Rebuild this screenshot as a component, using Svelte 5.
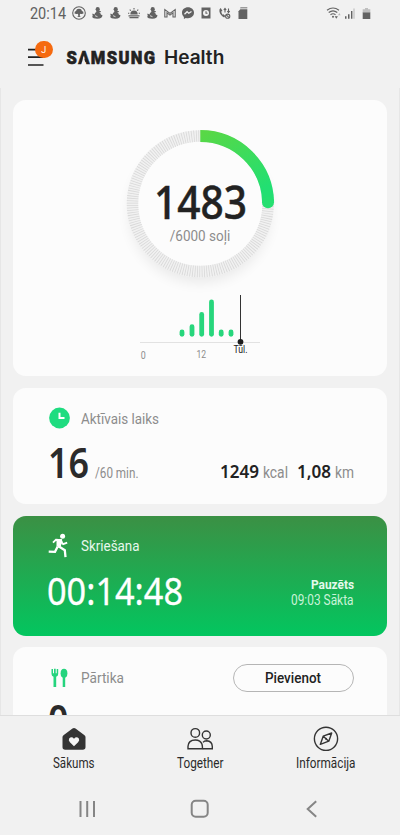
<script>
  const bars = [
    { x: 182, top: 329.5 },
    { x: 192, top: 324.3 },
    { x: 201.7, top: 312 },
    { x: 211.5, top: 299.5 },
    { x: 221.2, top: 329.5 },
    { x: 231, top: 329.5 }
  ];
</script>

{#snippet fit(text, width, height, base, cls)}
  <svg class="fit {cls}" {width} {height}><text x="0" y={base} textLength={width} lengthAdjust="spacingAndGlyphs">{text}</text></svg>
{/snippet}

{#snippet snowman()}
  <svg class="st" width="14" height="14" viewBox="0 0 14 14"><circle cx="7.700" cy="3.200" r="2.100"/><path d="M6.300 4.500h2.800l2 .9-.5.900-1.400-.1q1.800 1.300 1.800 2.600l1.400.3q.3 3.700-5.100 3.700-4.600 0-5.300-2.200l.9-.4q-.9-1.600-.3-2.700l1.900 1q.2-1.800 1.800-2.600z"/><path d="M5 9.700l2.500 1" stroke="#f1f1f1" stroke-width=".8"/></svg>
{/snippet}

<div class="screen">
  <div class="status">
    {@render fit('20:14', 36, 26, 19, 'clock')}
    <div class="notes">
      <svg class="st" width="14" height="14" viewBox="0 0 14 14"><circle cx="7" cy="7" r="6.300" class="line"/><path d="M2.500 7.500q-.2-2 1.500-2.400Q4.400 2.700 7 2.700t3 2.400q1.700.4 1.500 2.400-1.500.8-3.500.2l-.3 2.500 1.300.8H5l1.300-.8L6 7.700q-2 .6-3.500-.2z"/></svg>
      {@render snowman()}
      {@render snowman()}
      <svg class="st" width="14" height="14" viewBox="0 0 14 14"><path d="M3.300 8.500a3.700 3.900 0 0 1 7.400 0z"/><path d="M7 2v1.500M2.700 3.700l1.200 1M11.300 3.700l-1.200 1M1 7.300h1.300M11.700 7.300H13" class="line"/><path d="M1.500 9.200h11v1.200h-11zM2.500 11h9v1.300h-9z"/></svg>
      {@render snowman()}
      <svg class="st" width="14" height="14" viewBox="0 0 14 14"><path d="M1.800 11V3.500L7 7.400l5.200-3.900V11H10V6.800L7 9.100 4 6.800V11z" class="line"/></svg>
      <svg class="st" width="14" height="14" viewBox="0 0 14 14"><path d="M7 1.300c-3.400 0-6 2.300-6 5.500 0 1.700.7 3.100 1.900 4.100v2l1.900-1c.7.200 1.400.300 2.200.300 3.400 0 6-2.300 6-5.400S10.400 1.300 7 1.300z"/><path d="M3.500 8.300l2.600-2.600 1.700 1.500 2.700-1.700" fill="none" stroke="#f1f1f1" stroke-width="1.300"/></svg>
      <svg class="st" width="14" height="14" viewBox="0 0 14 14"><path d="M2.500 1.500h9v11h-9z"/><circle cx="7" cy="7" r="3" fill="#f1f1f1"/><path d="M7 5.200v2h1.500" class="line"/></svg>
      <svg class="st" width="14" height="14" viewBox="0 0 14 14"><path d="M2.700 2q-1.600.8-1.300 3.300.7 4 4.700 6.200l1.200-1.600-1.800-1.600-.8.500Q3.500 7.500 3.200 5.600L4.500 5z"/><path d="M7 2.500v4M10.500 2.500v4M5.800 4L7 2.500 8.200 4M9.300 5l1.200 1.500L11.700 5" class="line"/><circle cx="9.700" cy="10.200" r="2.100" class="line"/><path d="M8.300 8.800l2.800 2.800" class="line"/></svg>
      <svg class="st" width="14" height="14" viewBox="0 0 14 14"><path d="M4.500 1h6.800v1.600H4z" opacity=".6"/><path d="M4.300 3.300h7V13H2.500V5.200z"/></svg>
    </div>
    <svg class="st wifi" width="16" height="14" viewBox="0 0 16 14"><path d="M1 4.200q6-4.500 12 0M2.700 6.500q4.300-3.300 8.600 0M4.500 8.800q2.500-2 5 0" class="line"/><circle cx="7" cy="10.700" r="1"/><path d="M8.700 10.200h3.200l-1.600 2.500z"/><path d="M12 9.300h2.600L13.300 7z" opacity=".4"/></svg>
    <svg class="st signal" width="12" height="14" viewBox="0 0 12 14"><path d="M1 10.200h1.500v2.500H1zM4 8.200h1.500v4.500H4zM7 5h1.400v7.700H7z"/><path d="M9.300 2.500h1.400v10.200H9.300z" opacity=".3"/></svg>
    <svg class="st battery" width="9" height="13" viewBox="0 0 9 13"><path d="M3 1h3v1.200h2.300V6H.7V2.200H3z" opacity=".35"/><path d="M.7 5.500h7.600V12H.7z"/></svg>
  </div>

  <header>
    <div class="menu">
      <svg width="18" height="20" viewBox="0 0 18 20"><path d="M0 2.700h16M0 10.200h15.500M0 18h15.500" stroke="#222" stroke-width="1.700"/></svg>
      <span class="badge">J</span>
    </div>
    <svg class="brand" width="160" height="26" viewBox="66 45 160 26">
      <text class="samsung" x="66.500" y="64.300" textLength="90" lengthAdjust="spacingAndGlyphs">SAMSUNG</text>
      <path d="M83.600 56l-2.300 9h4.600z" class="notch"/>
      <text class="health" x="164" y="64.300" textLength="60.300" lengthAdjust="spacingAndGlyphs">Health</text>
    </svg>
  </header>

  <main>
    <section class="card steps">
      <svg width="180" height="180" viewBox="110 114 180 180">
        <defs>
          <linearGradient id="arc" x1="0" y1="0" x2="0.600" y2="1"><stop offset="0" stop-color="#58d846"/><stop offset="1" stop-color="#22df72"/></linearGradient>
          <filter id="soft" x="-30%" y="-30%" width="160%" height="160%"><feGaussianBlur stdDeviation="7"/></filter>
        </defs>
        <circle cx="200" cy="212" r="70" fill="#000" opacity=".08" filter="url(#soft)"/>
        <circle cx="200.300" cy="203.800" r="73.500" fill="#fcfcfc"/>
        <circle cx="200.300" cy="203.800" r="67.800" fill="none" stroke="#f1f1f1" stroke-width="11.500"/>
        <circle cx="200.300" cy="203.800" r="67.800" fill="none" stroke="#d8d8d8" stroke-width="11.500" stroke-dasharray=".8 1.566"/>
        <path d="M200.300 136a67.800 67.800 0 0 1 67.800 66" fill="none" stroke="url(#arc)" stroke-width="12"/>
        <circle cx="268" cy="202.300" r="6" fill="#25df70"/>
        <text class="count" x="154" y="219.300" textLength="93" lengthAdjust="spacingAndGlyphs">1483</text>
        <text class="goal" x="169.800" y="240.800" textLength="60.500" lengthAdjust="spacingAndGlyphs">/6000 soļi</text>
      </svg>
      <svg width="140" height="82" viewBox="130 294 140 82">
        {#each bars as b}
          <rect x={b.x - 2.4} y={b.top} width="4.800" height={336.7 - b.top} rx="2.400" fill="#27d67c"/>
        {/each}
        <path d="M140 342.500h120" stroke="#e2e2e2"/>
        <path d="M240.500 295v47" stroke="#333"/>
        <circle cx="240.500" cy="341.800" r="2.900" fill="#1d1d1d"/>
        <text class="tick" x="140.700" y="358.700" textLength="5" lengthAdjust="spacingAndGlyphs">0</text>
        <text class="tick" x="196.500" y="358.300" textLength="9.700" lengthAdjust="spacingAndGlyphs">12</text>
        <text class="tick now" x="233.500" y="353" textLength="14" lengthAdjust="spacingAndGlyphs">Tūl.</text>
      </svg>
    </section>

    <section class="card active">
      <div class="title">
        <svg width="22" height="22" viewBox="0 0 22 22"><circle cx="10.500" cy="11" r="10.400" fill="#1fdc80"/><path d="M10.500 5.800v5.300h5" fill="none" stroke="#fff" stroke-width="2"/></svg>
        {@render fit('Aktīvais laiks', 78, 22, 16.5, 'label')}
      </div>
      <div class="row">
        {@render fit('16', 41, 32, 30, 'minutes')}
        {@render fit('/60 min.', 43.5, 20, 18, 'unit small')}
        <div class="spacer"></div>
        {@render fit('1249', 39, 20, 18, 'value')}
        {@render fit('kcal', 25, 20, 18, 'unit kcal')}
        {@render fit('1,08', 34, 20, 18, 'value km')}
        {@render fit('km', 19, 20, 18, 'unit kmu')}
      </div>
    </section>

    <section class="card run">
      <div class="title">
        <svg width="22" height="26" viewBox="0 0 22 26"><circle cx="14.600" cy="3.200" r="2.500" fill="#fff"/><path d="M5 9.700L8 6.700l5 .4-2.200 7.200M12.500 8l2.700 3.200 4-1.500" fill="none" stroke="#fff" stroke-width="1.900"/><path d="M8.500 6.200h5.200l.8 2.300-2.200 6-3.800-1.300z" fill="#fff"/><path d="M9.700 13.500L7 18.800l-6.300-.2M11 13.500l5.800 3.700.7 7" fill="none" stroke="#fff" stroke-width="2.300"/></svg>
        {@render fit('Skriešana', 58.5, 22, 16.3, 'label')}
      </div>
      <div class="row">
        {@render fit('00:14:48', 136, 34, 30, 'timer')}
        <div class="spacer"></div>
        <div class="state">
          {@render fit('Pauzēts', 43, 16, 12, 'paused')}
          {@render fit('09:03 Sākta', 62.5, 16, 12.3, 'started')}
        </div>
      </div>
    </section>

    <section class="card food">
      <div class="title">
        <svg width="22" height="22" viewBox="0 0 22 22"><path d="M2.500 2h1.500v4.200h1V1.700h1.700v4.500h1V2h1.500v5q0 2-2 2.700V20H4.500V9.700q-2-.7-2-2.700z" fill="#25d47e"/><ellipse cx="15" cy="6.200" rx="3.400" ry="4.500" fill="#25d47e"/><path d="M13.700 9h2.500v11h-2.500z" fill="#25d47e"/></svg>
        {@render fit('Pārtika', 43, 22, 16.3, 'label')}
        <div class="spacer"></div>
        <button>{@render fit('Pievienot', 56, 20, 14.5, 'add')}</button>
      </div>
      <div class="kcal-count">{@render fit('0', 20.5, 32, 30, 'minutes')}</div>
    </section>
  </main>

  <nav>
    <div class="tab">
      <svg width="28" height="28" viewBox="0 0 28 28"><path d="M14 3q.8 0 1.500.6l8.700 6.500q1.300.8 1.300 2v9.900q0 2.700-2.700 2.700H5.200q-2.700 0-2.700-2.700v-9.900q0-1.200 1.300-2l8.700-6.500Q13.200 3 14 3z" fill="#343434"/><path d="M14 21.200l-4.100-4Q8 15 9.300 13.200q2.400-2.200 4.700.5 2.300-2.700 4.700-.5Q20 15 18.100 17.200z" fill="#f5f5f5"/></svg>
      {@render fit('Sākums', 41.5, 18, 15, 'navtext')}
    </div>
    <div class="tab">
      <svg width="28" height="28" viewBox="0 0 28 28" fill="none" stroke="#343434" stroke-width="1.400"><circle cx="9.300" cy="7.900" r="4.300"/><path d="M2 23.800v-2.500q.4-6.300 7.300-6.300 5.300 0 6.700 4.300.5 1.700.5 4.500z"/><circle cx="20.300" cy="10" r="4"/><path d="M17 17.400q1.300-1.600 3.700-1.600 5.400.3 5.600 5.700v2.300h-9.500"/></svg>
      {@render fit('Together', 46.5, 18, 15, 'navtext')}
    </div>
    <div class="tab">
      <svg width="28" height="28" viewBox="0 0 28 28" fill="none" stroke="#343434" stroke-width="1.400" stroke-linejoin="round"><circle cx="14" cy="13.800" r="11.600"/><path d="M19.700 8l-2.900 8.200-8.500 3.200 2.900-8.200zM11.200 11.200l5.600 5"/><circle cx="14" cy="13.800" r="1" fill="#343434" stroke="none"/></svg>
      {@render fit('Informācija', 59.5, 18, 15, 'navtext')}
    </div>
  </nav>

  <div class="system">
    <svg width="20" height="20" viewBox="0 0 20 20"><path d="M3.500 2v16M10.200 2v16M17 2v16"/></svg>
    <svg width="20" height="20" viewBox="0 0 20 20"><rect x="1.700" y="1.700" width="16" height="16" rx="4"/></svg>
    <svg width="20" height="20" viewBox="0 0 20 20"><path d="M14.200 2.200L5.700 10l8.500 7.800"/></svg>
  </div>
</div>

<style>
  :global(body) { background: #f1f1f1; }
  * { box-sizing: border-box; }
  svg { display: block; flex: none; overflow: visible; }
  .screen { width: 400px; height: 835px; display: flex; flex-direction: column; overflow: hidden; background: #f1f1f1; font-family: Roboto, "Noto Sans", sans-serif; }
  .spacer { flex: 1; }

  .status { display: flex; align-items: center; height: 26px; padding-left: 30px; flex: none; }
  .clock { font-size: 16px; fill: #606060; }
  .notes { display: flex; margin-left: 6px; gap: 4.200px; align-items: center; }
  .st { fill: #626262; }
  .line { fill: none; stroke: #626262; stroke-width: 1.100; }
  .wifi { margin-left: 76px; }
  .signal { margin-left: 2px; }
  .battery { margin-left: 6px; }

  header { display: flex; align-items: flex-start; height: 62px; flex: none; padding: 19px 0 0 28px; }
  .menu { position: relative; width: 38px; padding-top: 1.500px; }
  .badge { position: absolute; left: 7px; top: -4.500px; width: 17.500px; height: 17.500px; border-radius: 50%; background: #f56a10; color: #fff; font-size: 9px; line-height: 18px; text-align: center; }
  .samsung { font: 900 18px Roboto, sans-serif; letter-spacing: 1.500px; fill: #222; stroke: #222; stroke-width: .6px; }
  .health { font: 600 18.500px Inter, sans-serif; fill: #222; }
  .notch { fill: #f1f1f1; }

  main { flex: none; height: 627px; overflow: hidden; border: solid #e6e6e6; border-width: 0 1px; padding: 12px 12px 0; }
  .card { background: #fcfcfc; border-radius: 13px; margin-bottom: 11.500px; overflow: hidden; }
  .steps { height: 276px; padding-top: 14px; display: flex; flex-direction: column; align-items: center; }
  .count { font: 500 46px "Noto Sans", sans-serif; fill: #222; stroke: #222; stroke-width: .5px; }
  .goal { font-size: 14.200px; fill: #8c8c8c; }
  .tick { font-size: 10.500px; fill: #8c8c8c; }
  .now { fill: #222; }

  .active { height: 116.500px; padding: 19.500px 33.500px 0 36px; }
  .title { display: flex; align-items: center; height: 22px; gap: 10px; }
  .label { font-size: 14px; fill: #8c8c8c; }
  .row { display: flex; align-items: flex-end; }
  .active .row { margin-top: 18.500px; }
  .minutes { font: 600 41px "Noto Sans", sans-serif; fill: #2b2b2b; margin-left: -1px; }
  .small { font-size: 14px; margin-left: 6px; }
  .unit { fill: #8c8c8c; }
  .value { font: 600 18.500px "Noto Sans", sans-serif; fill: #222; }
  .kcal { font-size: 16.500px; margin-left: 4px; }
  .km { margin-left: 8.500px; }
  .kmu { font-size: 16.500px; margin-left: 4px; }

  .run { height: 120px; padding: 19px 33.500px 0 35px; background: linear-gradient(#3b9044, #03c65f); }
  .run .title { gap: 11px; }
  .run .label { fill: #e8f8ed; }
  .run .row { margin-top: 18px; }
  .timer { font: 400 38.500px "Noto Sans", sans-serif; fill: #fff; stroke: #fff; stroke-width: .3px; margin-left: -1.500px; }
  .state { display: flex; flex-direction: column; align-items: flex-end; }
  .paused { font-size: 13.500px; font-weight: 700; fill: #e4faec; }
  .started { font-size: 14.500px; fill: #c9f3d8; }

  .food { height: 120px; padding: 16px 33.500px 0 36px; }
  .food .title { height: 29px; }
  button { width: 120.500px; height: 28px; border: 1px solid #b5b5b5; border-radius: 15px; background: #fcfcfc; padding: 0; display: flex; align-items: center; justify-content: center; }
  .add { font: 500 14px Roboto, sans-serif; fill: #222; }
  .kcal-count { margin-top: 13px; }

  nav { display: flex; height: 63px; flex: none; padding: 8.500px 11px 0; border-top: 1px solid #dedede; }
  .tab { flex: 1; display: flex; flex-direction: column; align-items: center; gap: .5px; }
  .navtext { font-size: 14.200px; fill: #2b2b2b; }
  .system { display: flex; justify-content: space-between; padding: 21px 78px 0 77px; }
  .system svg { fill: none; stroke: #858585; stroke-width: 2; }
</style>
